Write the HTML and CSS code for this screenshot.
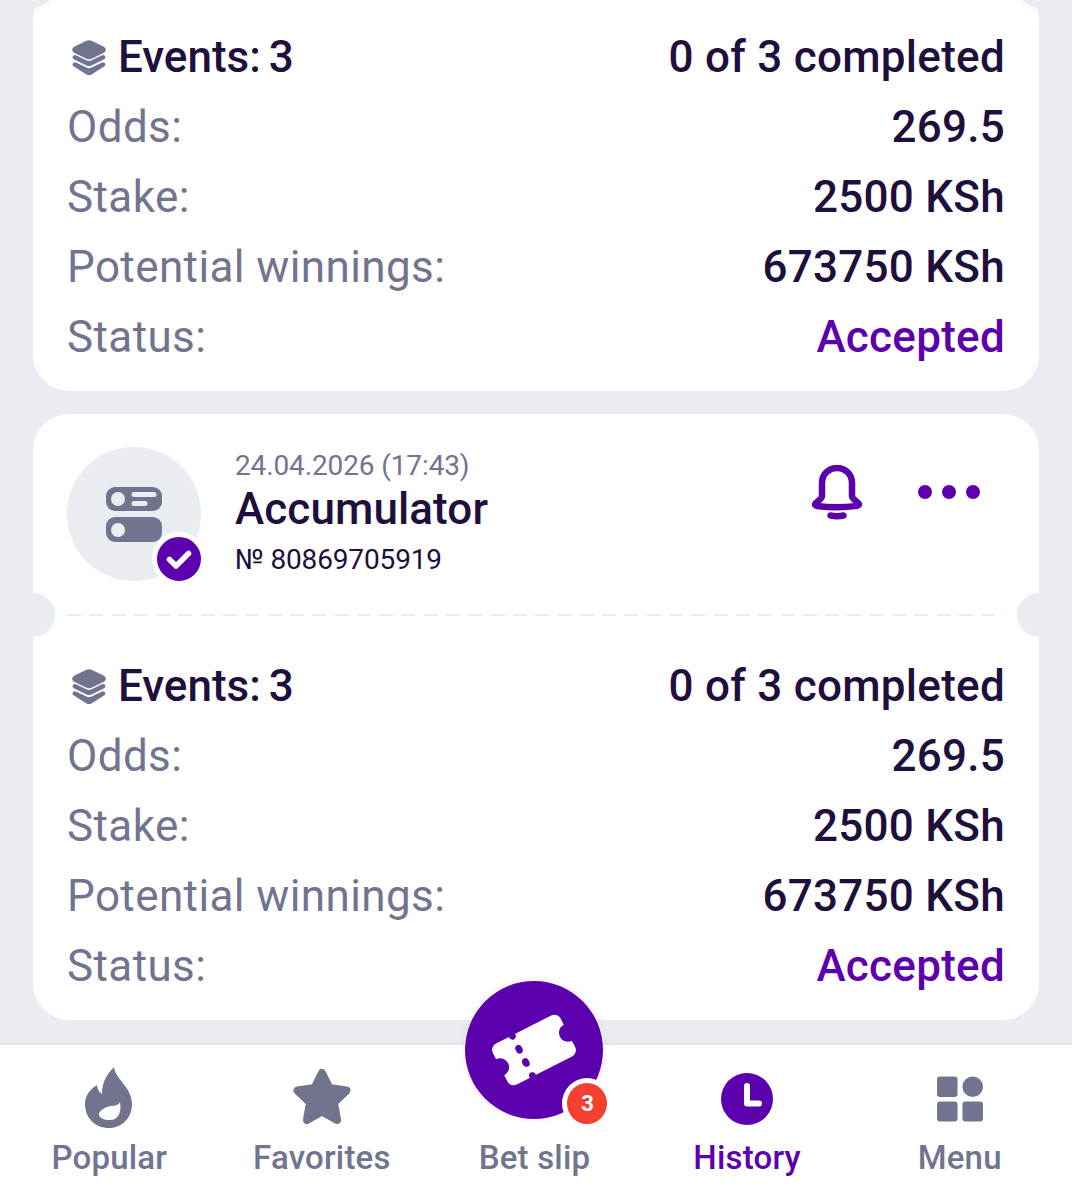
FILE: index.html
```html
<!DOCTYPE html>
<html lang="en">
<head>
    <meta charset="UTF-8" />
    <title>Bet history</title>
    <link rel="stylesheet" href="styles.css">
</head>
<body>
<svg class="defs" width="0" height="0">
    <symbol id="i-server" viewBox="0 0 56 55">
        <path fill-rule="evenodd" d="M9 0H47A9 9 0 0 1 56 9V15A9 9 0 0 1 47 24H9A9 9 0 0 1 0 15V9A9 9 0 0 1 9 0ZM12 5A7 7 0 1 0 12 19A7 7 0 1 0 12 5ZM28 5A2.5 2.5 0 0 0 28 10H48A2.500 2.500 0 0 0 48 5ZM28 14A2.500 2.500 0 0 0 28 19H39A2.500 2.500 0 0 0 39 14Z"/>
        <path fill-rule="evenodd" d="M9 30H47A9 9 0 0 1 56 39V46A9 9 0 0 1 47 55H9A9 9 0 0 1 0 46V39A9 9 0 0 1 9 30ZM12 36A7 7 0 1 0 12 50A7 7 0 1 0 12 36Z"/>
    </symbol>
    <symbol id="i-layers" viewBox="0 0 34 36">
        <path d="M14.500 .8a6 6 0 0 1 5 0L31.500 6.500c3 1.500 3 5 0 6.500L19.500 18.700a6 6 0 0 1-5 0L2.500 13c-3-1.500-3-5 0-6.500Z"/>
        <path d="M1.500 15.500c.8-.8 1.800-.7 3 0L15 20.500a5 5 0 0 0 4 0L29.500 15.500c1.200-.7 2.200-.8 3 0c1.500 1.500 1.200 3-.8 4L19.500 25.500a6 6 0 0 1-5 0L2.300 19.500c-2-1-2.300-2.500-.8-4Z"/>
        <path d="M1.500 22.800c.8-.8 1.800-.7 3 0L15 27.800a5 5 0 0 0 4 0L29.500 22.800c1.200-.7 2.200-.8 3 0c1.500 1.500 1.200 3-.8 4L19.500 34.500a6 6 0 0 1-5 0L2.300 26.800c-2-1-2.300-2.500-.8-4Z"/>
    </symbol>
    <symbol id="i-bell" viewBox="0 0 52 55">
        <path class="line" d="M11 31V18C11 9.500 17.500 3 26 3S41 9.500 41 18V31C41 34 45 35.500 47.500 38.500C48.500 39.800 47.500 40.700 46 40.900C33 42.500 19 42.500 6 40.900C4.500 40.700 3.500 39.800 4.500 38.500C7 35.500 11 34 11 31Z"/>
        <path class="line" d="M19.500 50.500C24 51.500 28 51.500 32.500 50.500"/>
    </symbol>
    <symbol id="i-check" viewBox="0 0 44 44">
        <path class="tick" d="M12.500 22.500L19 29L31.500 16.500"/>
    </symbol>
</svg>

<div class="list">
    <!-- page is scrolled, only the lower part of this card is in view -->
    <div class="card">
        <div class="tear"></div>
        <div class="rows">
            <div class="row row-main">
                <div class="events"><svg class="layers"><use href="#i-layers"/></svg><span>Events:</span><span>3</span></div>
                <div class="value">0 of 3 completed</div>
            </div>
            <div class="row"><span class="label">Odds:</span><span class="value">269.5</span></div>
            <div class="row"><span class="label">Stake:</span><span class="value">2500 KSh</span></div>
            <div class="row"><span class="label">Potential winnings:</span><span class="value">673750 KSh</span></div>
            <div class="row"><span class="label">Status:</span><span class="value accepted">Accepted</span></div>
        </div>
    </div>

    <div class="card">
        <div class="card-head">
            <div class="avatar">
                <svg class="server"><use href="#i-server"/></svg>
                <span class="done"><svg><use href="#i-check"/></svg></span>
            </div>
            <div class="head-text">
                <div class="date">24.04.2026 (17:43)</div>
                <div class="title">Accumulator</div>
                <div class="number">№ 80869705919</div>
            </div>
            <div class="actions">
                <svg class="bell"><use href="#i-bell"/></svg>
                <div class="dots"><i></i><i></i><i></i></div>
            </div>
        </div>
        <div class="tear"></div>
        <div class="rows">
            <div class="row row-main">
                <div class="events"><svg class="layers"><use href="#i-layers"/></svg><span>Events:</span><span>3</span></div>
                <div class="value">0 of 3 completed</div>
            </div>
            <div class="row"><span class="label">Odds:</span><span class="value">269.5</span></div>
            <div class="row"><span class="label">Stake:</span><span class="value">2500 KSh</span></div>
            <div class="row"><span class="label">Potential winnings:</span><span class="value">673750 KSh</span></div>
            <div class="row"><span class="label">Status:</span><span class="value accepted">Accepted</span></div>
        </div>
    </div>
</div>

<nav class="nav">
    <div class="nav-item">
        <div class="nav-icon">
            <svg width="48" height="61" viewBox="0 0 48 61"><path fill-rule="evenodd" d="M29 0C30 12 47 20 47 37C47 51 37 61 24 61C10 61 0 51 0 37C0 29 5 22 12 18C12 22 14 25 17 27C17 15 22 7 29 0ZM35 35C33 40 27 38 22 40C17 42 14 45 14 47C14 51 19 53 25 53C32 53 37 47 35 35Z"/></svg>
        </div>
        <span>Popular</span>
    </div>
    <div class="nav-item">
        <div class="nav-icon">
            <svg width="60" height="58" viewBox="0 0 60 58"><path class="star" d="M30 5L37.500 20L54.500 22.500L42 34.500L45 52L30 43.500L15 52L18 34.500L5.500 22.500L22.500 20Z"/></svg>
        </div>
        <span>Favorites</span>
    </div>
    <div class="nav-item nav-bet">
        <div class="bet-btn">
            <svg width="138" height="138" viewBox="0 0 138 138">
                <g transform="rotate(-27 69 69)">
                    <rect x="31" y="46" width="76" height="46" rx="7" fill="#fff"/>
                    <circle cx="31" cy="69" r="9"/>
                    <circle cx="107" cy="69" r="9"/>
                    <ellipse cx="56" cy="46" rx="3.500" ry="4.500"/>
                    <ellipse cx="56" cy="61.500" rx="3.500" ry="4.500"/>
                    <ellipse cx="56" cy="76.500" rx="3.500" ry="4.500"/>
                    <ellipse cx="56" cy="92" rx="3.500" ry="4.500"/>
                </g>
            </svg>
            <span class="bet-count">3</span>
        </div>
        <span>Bet slip</span>
    </div>
    <div class="nav-item active">
        <div class="nav-icon">
            <svg class="low" width="52" height="52" viewBox="0 0 52 52"><circle cx="26" cy="26" r="26"/><path class="hand" d="M26 13V30.500H38"/></svg>
        </div>
        <span>History</span>
    </div>
    <div class="nav-item">
        <div class="nav-icon">
            <svg class="low" width="46" height="46" viewBox="0 0 47 46"><rect width="21" height="21" rx="3"/><circle cx="36.500" cy="10.500" r="10.500"/><rect y="25.500" width="21" height="20.500" rx="3"/><rect x="26" y="25.500" width="21" height="20.500" rx="3"/></svg>
        </div>
        <span>Menu</span>
    </div>
</nav>
</body>
</html>
```

FILE: styles.css
```css
html, body {
    margin: 0;
    padding: 0;
}

body {
    background-color: #e9edf2;
    font-family: Roboto, "Liberation Sans", sans-serif;
    color: #1f0f3d;
    overflow: hidden;
}

.defs {
    display: block;
}

.list {
    margin-top: -15px;
    padding: 0 33px;
    display: flex;
    flex-direction: column;
    gap: 23px;
}

.card {
    background-color: #fff;
    border-radius: 36px;
    padding-bottom: 19px;
}

.card-head {
    height: 134px;
    padding: 33px 34px;
    display: flex;
    position: relative;
}

.avatar {
    width: 134px;
    height: 134px;
    flex: none;
    border-radius: 50%;
    background-color: #e9edf2;
    display: flex;
    align-items: center;
    justify-content: center;
    position: relative;
}

.server {
    width: 56px;
    height: 55px;
    fill: #72748f;
}

.done {
    position: absolute;
    right: -5px;
    bottom: -5px;
    width: 54px;
    height: 54px;
    box-sizing: border-box;
    border: 5px solid #fff;
    border-radius: 50%;
    background-color: #5c00ae;
}

.done svg {
    display: block;
    width: 44px;
    height: 44px;
}

.tick {
    fill: none;
    stroke: #fff;
    stroke-width: 5.500;
    stroke-linecap: round;
    stroke-linejoin: round;
}

.head-text {
    margin-left: 34px;
    flex: 1;
}

.date {
    font-size: 28px;
    line-height: 38px;
    letter-spacing: -0.12px;
    color: #72748f;
}

.title {
    font-size: 44px;
    line-height: 48px;
    font-weight: 500;
    letter-spacing: 0.1px;
}

.number {
    margin-top: 8px;
    font-size: 28px;
    line-height: 38px;
    letter-spacing: -0.15px;
}

.actions {
    display: flex;
    align-items: flex-start;
    gap: 55px;
    padding: 18px 25px 0 0;
}

.bell {
    width: 52px;
    height: 55px;
}

.line {
    fill: none;
    stroke: #5c00ae;
    stroke-width: 6.500;
    stroke-linecap: round;
    stroke-linejoin: round;
}

.dots {
    display: flex;
    gap: 10px;
    padding-top: 20px;
}

.dots i {
    display: block;
    width: 14px;
    height: 14px;
    border-radius: 50%;
    background-color: #5c00ae;
}

.tear {
    height: 2px;
    margin: 0 34px;
    position: relative;
    background-image: repeating-linear-gradient(90deg, #e9edf2 0, #e9edf2 14px, transparent 14px, transparent 22.300px);
}

.tear::before, .tear::after {
    content: "";
    position: absolute;
    top: -21px;
    width: 44px;
    height: 44px;
    border-radius: 50%;
    background-color: #e9edf2;
}

.tear::before {
    left: -56px;
}

.tear::after {
    right: -56px;
}

.rows {
    padding: 35px 34px 0 34px;
}

.row {
    height: 70px;
    display: flex;
    align-items: center;
    justify-content: space-between;
    font-size: 44px;
    letter-spacing: 0.4px;
}

.label {
    color: #72748f;
}

.value {
    font-weight: 500;
    letter-spacing: 0.27px;
}

.accepted {
    color: #5c00ae;
}

.events {
    display: flex;
    align-items: center;
    font-weight: 500;
    gap: 11px;
    letter-spacing: 0;
}

.events span + span {
    margin-left: -3px;
}

.layers {
    width: 34px;
    height: 36px;
    margin: 2px 1px 0 5px;
    fill: #72748f;
}

.nav {
    margin-top: 23px;
    height: 155px;
    padding: 0 6px 0 3px;
    background-color: #fff;
    border-top: 2px solid #e1e5ea;
    display: grid;
    grid-template-columns: repeat(5, 1fr);
}

.nav-item {
    display: flex;
    flex-direction: column;
    align-items: center;
    font-size: 33px;
    font-weight: 500;
    line-height: 38px;
    letter-spacing: 0.2px;
    color: #72748f;
}

.nav-item svg {
    display: block;
}

.nav-icon {
    height: 60px;
    margin-top: 22px;
    margin-bottom: 12px;
    display: flex;
    align-items: center;
    justify-content: center;
    fill: #72748f;
}

.low {
    margin-top: 4px;
}

.star {
    stroke: #72748f;
    stroke-width: 8;
    stroke-linejoin: round;
}

.active {
    color: #5c00ae;
}

.active .nav-icon {
    fill: #5c00ae;
}

.hand {
    fill: none;
    stroke: #fff;
    stroke-width: 6;
    stroke-linecap: round;
    stroke-linejoin: round;
}

.bet-btn {
    width: 138px;
    height: 138px;
    margin-top: -64px;
    margin-bottom: 20px;
    flex: none;
    border-radius: 50%;
    background-color: #5c00ae;
    fill: #5c00ae;
    box-shadow: 0 0 0 1px #fff, 0 0 6px rgba(92, 0, 174, 0.15);
    position: relative;
}

.bet-count {
    position: absolute;
    left: 97px;
    top: 97px;
    width: 40px;
    height: 41px;
    border: 5px solid #fff;
    border-radius: 50%;
    background-color: #f6402f;
    color: #fff;
    font-size: 22px;
    font-weight: 700;
    line-height: 41px;
    letter-spacing: 0;
    text-align: center;
}
```
